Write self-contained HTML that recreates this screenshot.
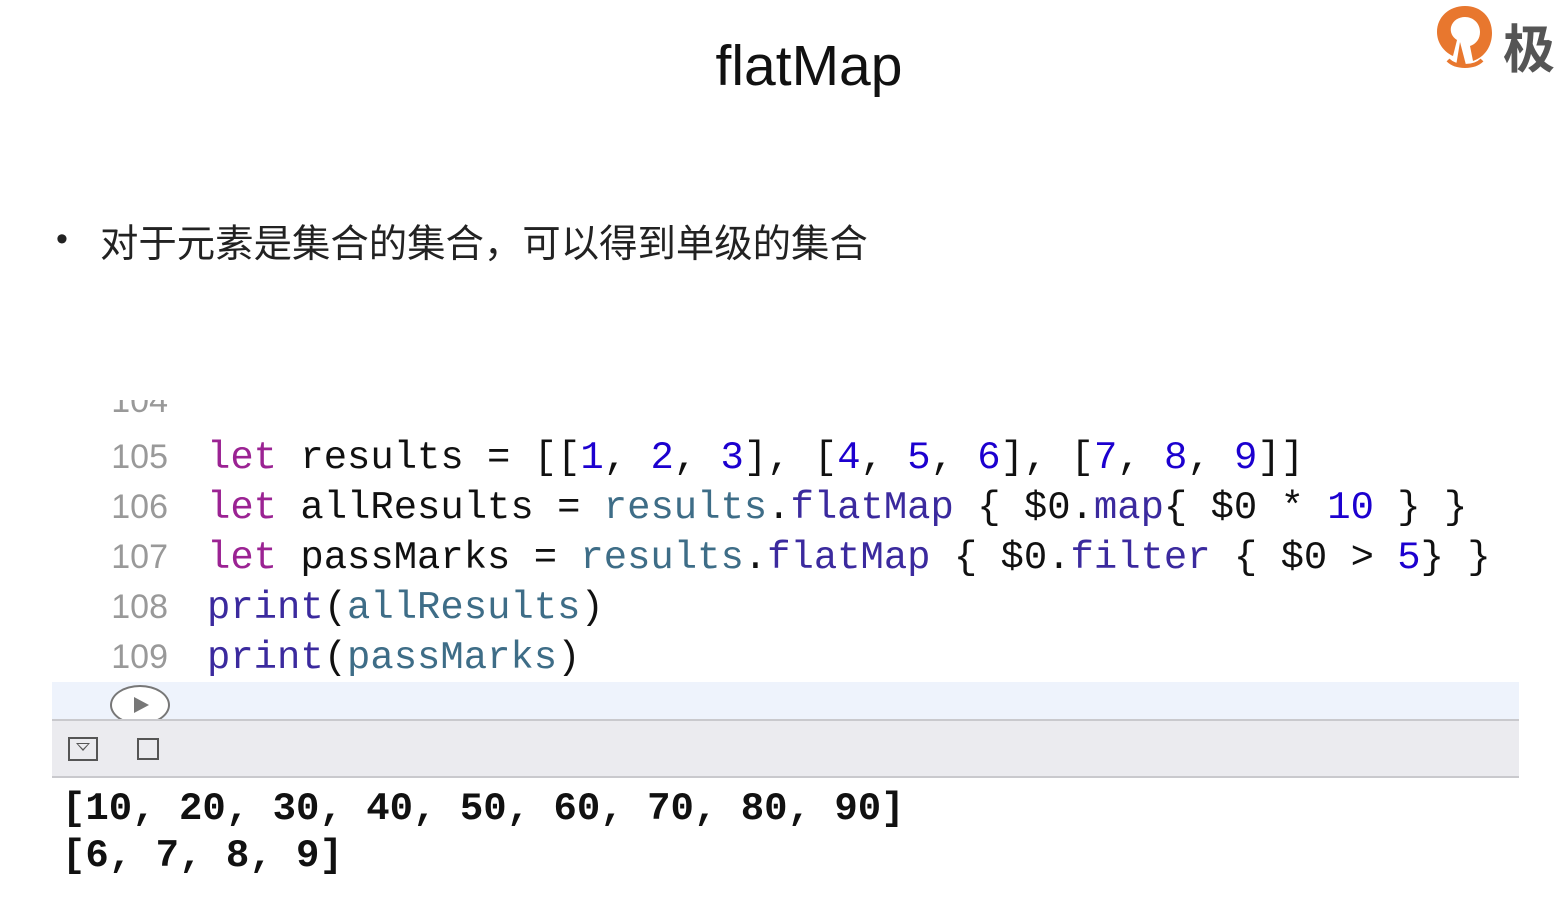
<!DOCTYPE html>
<html><head><meta charset="utf-8"><style>
body{margin:0;width:1561px;height:918px;background:#fff;position:relative;overflow:hidden;font-family:"Liberation Sans","Noto Sans CJK SC",sans-serif}
.abs{position:absolute;white-space:pre}
.code{font-family:"Liberation Mono",monospace;font-size:38.9px;color:#111}
.ln{font-family:"Liberation Sans",sans-serif;font-size:34px;color:#999;width:60px;text-align:right;left:108px}
.k{color:#9b2393}.n{color:#1c00cf}.f{color:#3b2a9e}.v{color:#3e6d87}
</style></head><body>
<div class="abs" style="left:0;width:1618px;text-align:center;top:33px;font-size:57px;color:#111">flatMap</div>
<svg class="abs" style="left:1434px;top:2px" width="62" height="72" viewBox="0 0 62 72">
<path d="M31 4C15 4 3 15 3 30c0 11 7 20 16 24l4-16c-5-3-7-8-6-13 2-7 8-10 14-10 8 0 15 6 15 15 0 7-4 12-10 14l3 15c12-4 19-15 19-28C58 15 47 4 31 4z" fill="#e8772e"/>
<path d="M26 40l-4 24 10-1z" fill="#e8772e"/>
<path d="M14 58c8 8 26 8 34 0" stroke="#e8772e" stroke-width="4" fill="none"/>
</svg>
<div class="abs" style="left:1503px;top:8px;font-size:52px;font-weight:bold;color:#555;font-family:'Noto Sans CJK SC',sans-serif">极</div>
<div class="abs" style="left:56px;top:220px;font-size:34px;color:#222">•</div>
<div class="abs" style="left:100px;top:213px;font-size:38.4px;color:#222;font-family:'Noto Sans CJK SC',sans-serif">对于元素是集合的集合，可以得到单级的集合</div>
<div class="abs" style="left:52px;top:400px;width:1467px;height:20px;overflow:hidden"><div class="abs ln" style="left:56px;top:-18px">104</div></div>
<div class="abs ln" style="top:438px">105</div>
<div class="abs ln" style="top:488px">106</div>
<div class="abs ln" style="top:538px">107</div>
<div class="abs ln" style="top:588px">108</div>
<div class="abs ln" style="top:638px">109</div>
<div class="abs code" style="left:207px;top:436px"><span class="k">let</span> results = [[<span class="n">1</span>, <span class="n">2</span>, <span class="n">3</span>], [<span class="n">4</span>, <span class="n">5</span>, <span class="n">6</span>], [<span class="n">7</span>, <span class="n">8</span>, <span class="n">9</span>]]</div>
<div class="abs code" style="left:207px;top:486px"><span class="k">let</span> allResults = <span class="v">results</span>.<span class="f">flatMap</span> { $0.<span class="f">map</span>{ $0 * <span class="n">10</span> } }</div>
<div class="abs code" style="left:207px;top:536px"><span class="k">let</span> passMarks = <span class="v">results</span>.<span class="f">flatMap</span> { $0.<span class="f">filter</span> { $0 &gt; <span class="n">5</span>} }</div>
<div class="abs code" style="left:207px;top:586px"><span class="f">print</span>(<span class="v">allResults</span>)</div>
<div class="abs code" style="left:207px;top:636px"><span class="f">print</span>(<span class="v">passMarks</span>)</div>
<div class="abs" style="left:52px;top:682px;width:1467px;height:37px;background:#eef3fc"></div>
<div class="abs" style="left:110px;top:685px;width:60px;height:40px;border:2px solid #777;border-radius:50%;background:#fff;box-sizing:border-box"></div>
<div class="abs" style="left:134px;top:697px;width:0;height:0;border-left:15px solid #777;border-top:8px solid transparent;border-bottom:8px solid transparent"></div>
<div class="abs" style="left:52px;top:719px;width:1467px;height:59px;background:#ebebef;border-top:2px solid #c9c9cd;border-bottom:2px solid #c9c9cd;box-sizing:border-box"></div>
<div class="abs" style="left:68px;top:737px;width:30px;height:24px;border:2px solid #555;box-sizing:border-box"></div>
<div class="abs" style="left:76px;top:743px;width:0;height:0;border-top:8px solid #555;border-left:7px solid transparent;border-right:7px solid transparent"></div>
<div class="abs" style="left:78px;top:744px;width:0;height:0;border-top:5px solid #ebebef;border-left:5px solid transparent;border-right:5px solid transparent"></div>
<div class="abs" style="left:137px;top:738px;width:22px;height:22px;border:2px solid #555;box-sizing:border-box"></div>
<div class="abs code" style="left:62px;top:786px;font-weight:bold;font-size:39px;line-height:47px">[10, 20, 30, 40, 50, 60, 70, 80, 90]
[6, 7, 8, 9]</div>
</body></html>
